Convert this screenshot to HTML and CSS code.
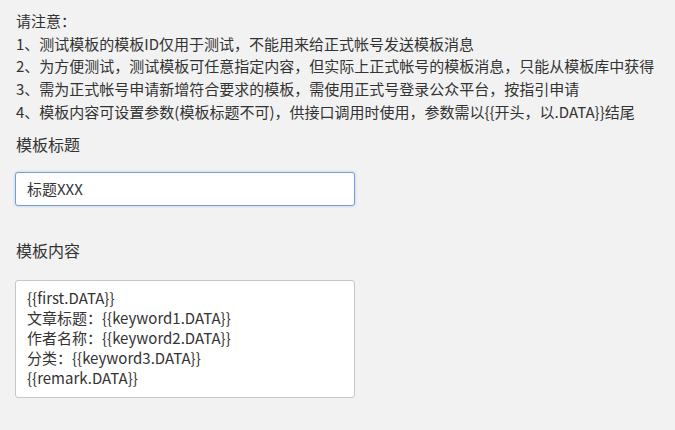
FILE: index.html
```html
<!DOCTYPE html>
<html>
    <head>
        <title> 模板消息测试 </title>
        <meta charset="UTF-8">
        <meta name="viewport" content="width=device-width, initial-scale=1">
        <link rel="stylesheet" href="styles.css">
    </head>
    <body>
        <div class="notice">
            <p>请注意：</p>
            <p>1、测试模板的模板ID仅用于测试，不能用来给正式帐号发送模板消息</p>
            <p>2、为方便测试，测试模板可任意指定内容，但实际上正式帐号的模板消息，只能从模板库中获得</p>
            <p>3、需为正式帐号申请新增符合要求的模板，需使用正式号登录公众平台，按指引申请</p>
            <p>4、模板内容可设置参数(模板标题不可)，供接口调用时使用，参数需以{{开头，以.DATA}}结尾</p>
        </div>

        <div class="field">
            <label class="label" for="title">模板标题</label>
            <input class="input focused" id="title" type="text" value="标题XXX">
        </div>

        <div class="field">
            <label class="label" for="content">模板内容</label>
            <div class="textarea" id="content">{{first.DATA}}
文章标题：{{keyword1.DATA}}
作者名称：{{keyword2.DATA}}
分类：{{keyword3.DATA}}
{{remark.DATA}}</div>
        </div>
    </body>
</html>
```

FILE: styles.css
```css
body {
    margin: 0;
    padding: 10px 16px;
    background: #f2f2f2;
    color: #333;
    font-family: "Noto Sans CJK SC", "Noto Sans", sans-serif;
    font-size: 15px;
}
.notice p {
    margin: 0;
    line-height: 22.7px;
}
.field {
    display: flex;
    flex-direction: column;
    align-items: flex-start;
}
.label {
    font-size: 16px;
    line-height: 24px;
    margin: 8px 0 16px;
}
.field + .field .label {
    margin: 32px 0 18px;
}
.input {
    box-sizing: border-box;
    width: 340px;
    height: 34px;
    margin-left: -1px;
    padding: 0 11px;
    border: 1px solid #ccc;
    border-radius: 3px;
    background: #fff;
    color: #333;
    font-family: inherit;
    font-size: 15px;
    outline: none;
}
.input.focused {
    border-color: #73a0d4;
    box-shadow: 0 0 3px rgba(102, 160, 220, 0.45);
}
.textarea {
    box-sizing: border-box;
    width: 340px;
    height: 118px;
    margin-left: -1px;
    padding: 7px 11px;
    border: 1px solid #c6c6c6;
    border-radius: 3px;
    background: #fff;
    line-height: 20px;
    white-space: pre;
}
```
